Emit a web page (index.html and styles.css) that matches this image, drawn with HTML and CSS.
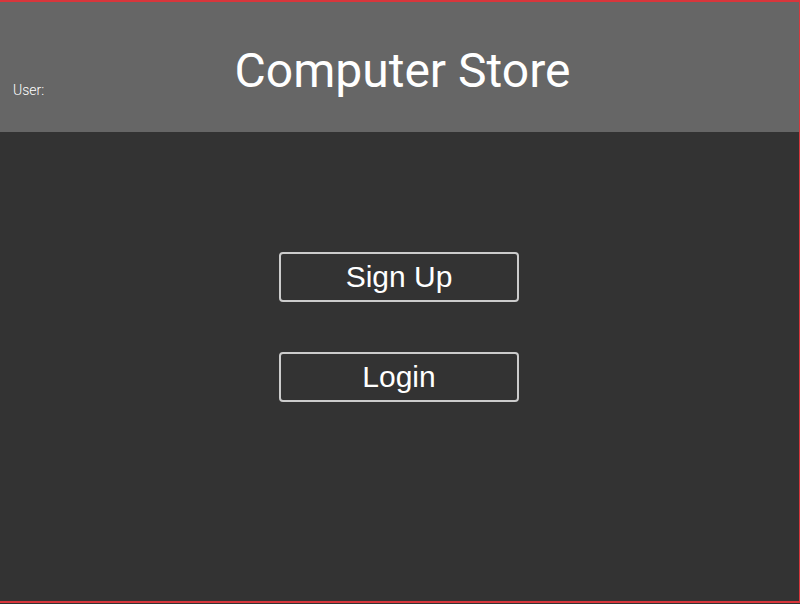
FILE: index.html
```html
<!DOCTYPE html>
<html>
<head>
<meta charset="utf-8">
<link rel="stylesheet" href="styles.css">
</head>
<body>
<div class="frame">
  <header class="header">
    <span class="user">User:</span>
    <h1 class="title">Computer Store</h1>
  </header>
  <main class="main">
    <button class="btn">Sign Up</button>
    <button class="btn">Login</button>
  </main>
</div>
</body>
</html>
```
FILE: styles.css
```css
html, body {
  margin: 0;
  padding: 0;
  background: #333333;
}
.frame {
  width: 800px;
  height: 603px;
  box-sizing: border-box;
  border-top: 2px solid #d8363c;
  border-bottom: 2px solid #d8363c;
  border-right: 1px solid #d8363c;
  display: flex;
  flex-direction: column;
  background: #333333;
}
.header {
  height: 130px;
  background: #666666;
  position: relative;
  display: flex;
  align-items: center;
  justify-content: center;
}
.user {
  position: absolute;
  left: 13px;
  top: 80px;
  font-family: Roboto, sans-serif;
  font-weight: 300;
  font-size: 14px;
  color: #ffffff;
}
.title {
  margin: 6px 0 0 6px;
  font-family: Roboto, sans-serif;
  font-weight: 400;
  font-size: 48px;
  color: #ffffff;
}
.main {
  flex: 1;
  display: flex;
  flex-direction: column;
  align-items: center;
  padding-top: 120px;
  padding-right: 1px;
  gap: 50px;
}
.btn {
  width: 240px;
  height: 50px;
  background: transparent;
  border: 2px solid #cccccc;
  border-radius: 4px;
  color: #ffffff;
  font-family: "Liberation Sans", Arial, sans-serif;
  font-size: 30px;
  padding: 0;
}
```
